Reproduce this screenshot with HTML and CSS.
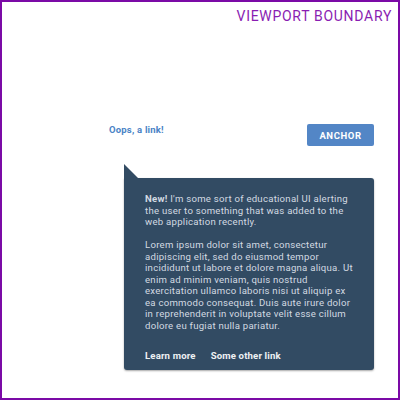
FILE: index.html
```html
<!DOCTYPE html>
<html>
<head>
<meta charset="utf-8">
<link rel="stylesheet" href="styles.css">
</head>
<body>
<div class="viewport">
  <div class="boundary-label">VIEWPORT BOUNDARY</div>
  <div class="anchor-row">
    <a class="oops" href="#">Oops, a link!</a>
    <button class="anchor-btn">ANCHOR</button>
  </div>
  <div class="popover">
    <p><strong>New!</strong> I'm some sort of educational UI alerting the user to something that was added to the web application recently.</p>
    <p>Lorem ipsum dolor sit amet, consectetur adipiscing elit, sed do eiusmod tempor incididunt ut labore et dolore magna aliqua. Ut enim ad minim veniam, quis nostrud exercitation ullamco laboris nisi ut aliquip ex ea commodo consequat. Duis aute irure dolor in reprehenderit in voluptate velit esse cillum dolore eu fugiat nulla pariatur.</p>
    <div class="links">
      <a href="#">Learn more</a>
      <a href="#">Some other link</a>
    </div>
  </div>
</div>
</body>
</html>
```
FILE: styles.css
```css
html, body {
  margin: 0;
  padding: 0;
  background: #fff;
}
.viewport {
  box-sizing: border-box;
  width: 400px;
  height: 400px;
  border: 2px solid #7b0aa6;
  font-family: Roboto, "Noto Sans", sans-serif;
}
.boundary-label {
  text-align: right;
  color: #8a1db2;
  font-size: 14px;
  line-height: 16px;
  letter-spacing: 0.7px;
  padding: 6px 6px 0 0;
}
.anchor-row {
  display: flex;
  justify-content: space-between;
  align-items: flex-start;
  margin-top: 100px;
  padding: 0 24px 0 107px;
}
.oops {
  color: #4a83c6;
  font-size: 9.5px;
  font-weight: 700;
  text-decoration: none;
  letter-spacing: 0.2px;
  line-height: 12px;
}
.anchor-btn {
  width: 67px;
  height: 22px;
  border: 0;
  border-radius: 2px;
  background: #5386c6;
  color: #fff;
  font-family: Roboto, sans-serif;
  font-size: 9.5px;
  font-weight: 700;
  letter-spacing: 0.6px;
  padding: 0;
}
.popover {
  position: relative;
  box-sizing: border-box;
  width: 250px;
  margin: 32px 0 0 122px;
  padding: 15px 21px 8px 21px;
  background: #324b63;
  border-radius: 0 3px 3px 3px;
  box-shadow: 0 1px 2px rgba(0, 0, 0, 0.35);
  color: #d3dae2;
  font-size: 9.6px;
  line-height: 11.5px;
  letter-spacing: 0.25px;
}
.popover::before {
  content: "";
  position: absolute;
  left: 0;
  top: -14px;
  border-left: 14px solid #324b63;
  border-top: 14px solid transparent;
}
.popover p {
  margin: 0 0 11.5px 0;
}
.popover strong {
  font-weight: 700;
}
.links {
  display: flex;
  gap: 15px;
  margin-top: 19px;
}
.links a {
  color: #eef1f4;
  font-weight: 700;
  text-decoration: none;
  font-size: 9.6px;
  letter-spacing: 0.15px;
}
```
